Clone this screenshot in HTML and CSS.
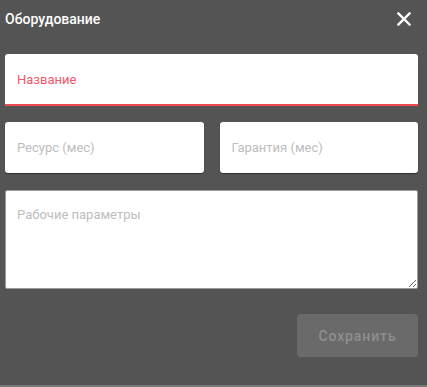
FILE: index.html
```html
<!DOCTYPE html>
<html lang="ru">
<head>
<meta charset="utf-8">
<link rel="stylesheet" href="styles.css">
</head>
<body>
<div class="dialog">
  <div class="header">
    <div class="title">Оборудование</div>
    <svg class="close" width="14" height="14" viewBox="0 0 14 14"><path d="M1.5 1.5 L12.5 12.5 M12.5 1.5 L1.5 12.5" stroke="#fff" stroke-width="2.4" stroke-linecap="square"/></svg>
  </div>
  <div class="form">
    <input class="field name" type="text" placeholder="Название">
    <div class="row">
      <input class="field half" type="text" placeholder="Ресурс (мес)">
      <input class="field half" type="text" placeholder="Гарантия (мес)">
    </div>
    <textarea class="area" placeholder="Рабочие параметры"></textarea>
    <div class="actions">
      <button class="save" type="button">Сохранить</button>
    </div>
  </div>
</div>
</body>
</html>
```
FILE: styles.css
```css
html, body {
  margin: 0;
  padding: 0;
  background: #777777;
  font-family: Roboto, "Liberation Sans", sans-serif;
}
.dialog {
  width: 427px;
  height: 385px;
  background: #545454;
  box-sizing: border-box;
  padding: 0 9px 0 5px;
}
.header {
  display: flex;
  align-items: center;
  justify-content: space-between;
  height: 38px;
  padding-right: 7px;
}
.title {
  color: #ffffff;
  font-size: 14px;
  font-weight: 500;
}
.close {
  display: block;
}
.form {
  display: flex;
  flex-direction: column;
  padding-top: 16px;
}
.field {
  display: block;
  box-sizing: border-box;
  border: none;
  border-radius: 3px;
  background: #ffffff;
  font-family: Roboto, "Liberation Sans", sans-serif;
  font-size: 13px;
  padding: 0 12px;
  outline: none;
  margin: 0;
}
.name {
  width: 413px;
  height: 52px;
  border-bottom: 2px solid #f04a56;
  border-radius: 3px 3px 0 0;
}
.name::placeholder {
  color: #f2576a;
}
.row {
  display: flex;
  gap: 16px;
  margin-top: 16px;
}
.half {
  width: 199px;
  height: 51px;
  box-shadow: 0 1px 1px rgba(0,0,0,0.45);
}
.half::placeholder {
  color: #bdbdbd;
}
.area {
  display: block;
  box-sizing: border-box;
  width: 413px;
  height: 99px;
  margin: 17px 0 0 0;
  border: 1px solid #9a9a9a;
  border-radius: 2px;
  background: #ffffff;
  font-family: Roboto, "Liberation Sans", sans-serif;
  font-size: 13px;
  padding: 16px 11px;
  outline: none;
  resize: both;
}
.area::placeholder {
  color: #bdbdbd;
}
.actions {
  display: flex;
  justify-content: flex-end;
  margin-top: 25px;
}
.save {
  width: 121px;
  height: 43px;
  border: none;
  border-radius: 4px;
  background: #6a6a6a;
  color: #8e8e8e;
  font-family: Roboto, "Liberation Sans", sans-serif;
  font-size: 14px;
  font-weight: 500;
  letter-spacing: 0.9px;
  padding: 0;
}
```
